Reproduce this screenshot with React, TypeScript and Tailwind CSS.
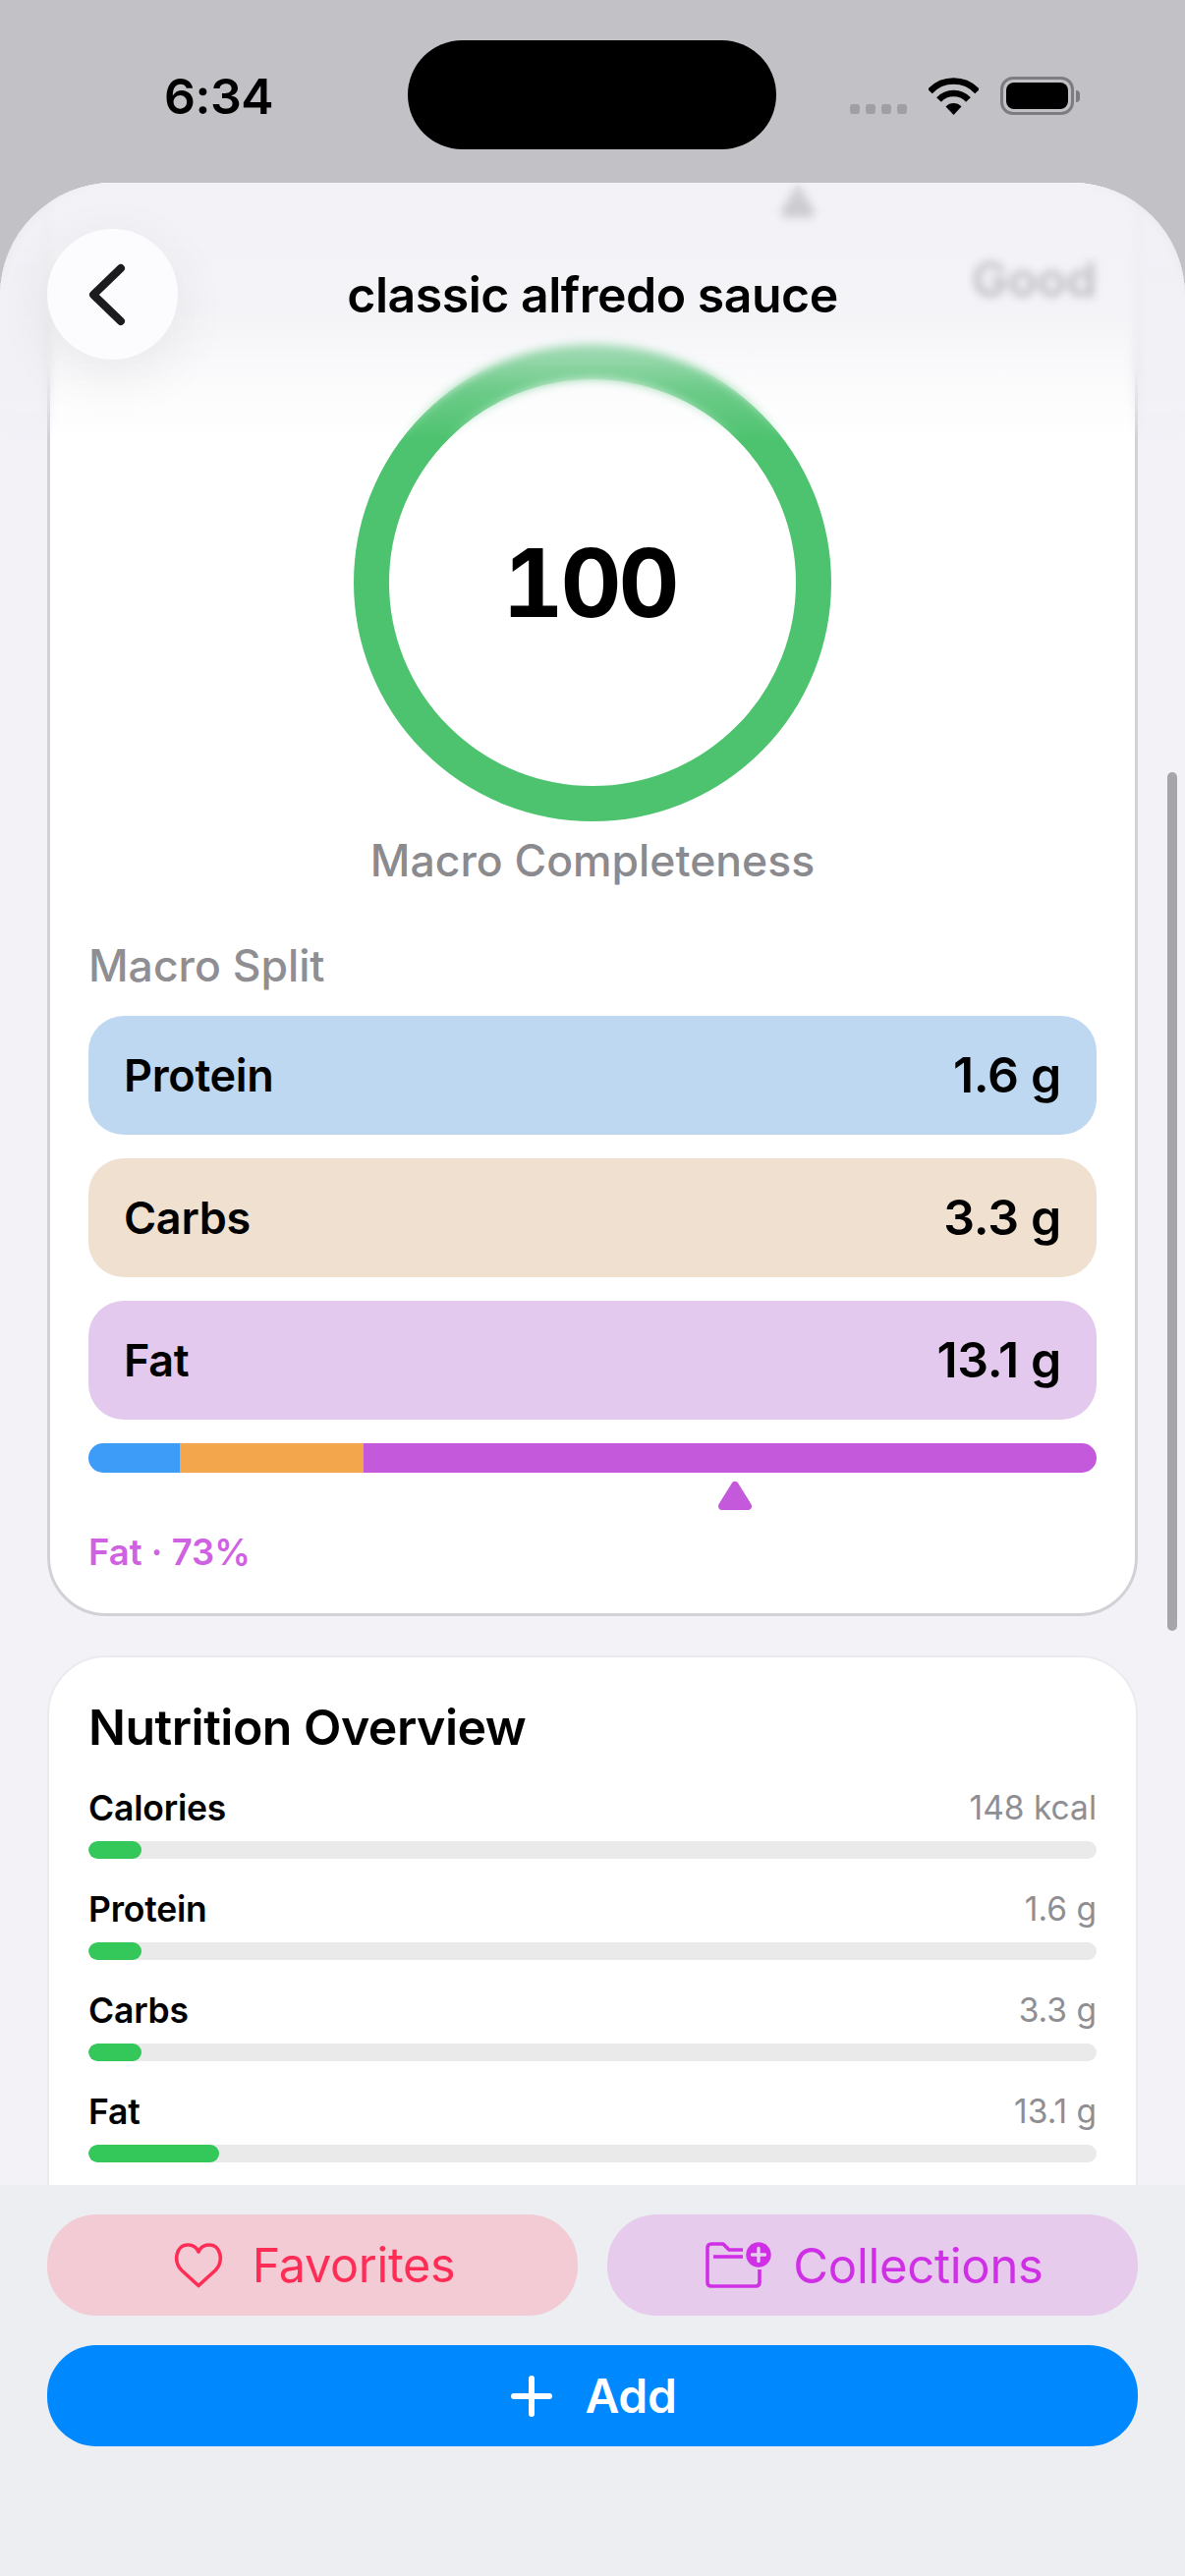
import React from "react";

const font = { fontFamily: "Inter, 'Liberation Sans', sans-serif" };

function Wifi() {
  return (
    <svg width="51" height="38" viewBox="0 0 51 38" fill="none" stroke="black" strokeWidth="6.5">
      <path d="M1.4 14 A33 33 0 0 1 49.6 14" />
      <path d="M10.5 22.5 A20.5 20.5 0 0 1 40.5 22.5" />
      <path d="M25.5 38 L17.5 29.5 A11 11 0 0 1 33.5 29.5 Z" fill="black" stroke="none" />
    </svg>
  );
}

function Battery() {
  return (
    <div className="flex items-center gap-[2px]">
      <div className="flex h-[39px] w-[75px] items-center justify-center rounded-[13px] border-[3px] border-[#7d7d80]">
        <div className="h-[27px] w-[63px] rounded-[8px] bg-black" />
      </div>
      <div className="h-[12px] w-[4px] rounded-r-[4px] bg-[#7d7d80]" />
    </div>
  );
}

function Triangle({ color, w, h }: { color: string; w: number; h: number }) {
  return (
    <svg width={w} height={h} viewBox="0 0 34 31" preserveAspectRatio="none" className="block">
      <path d="M17 5 L30 26 H4 Z" fill={color} stroke={color} strokeWidth="8" strokeLinejoin="round" />
    </svg>
  );
}

function MacroRow({ label, value, bg }: { label: string; value: string; bg: string }) {
  return (
    <div className={`flex h-[121px] items-center justify-between rounded-[36px] px-[36px] ${bg}`}>
      <span className="text-[45px] font-semibold tracking-[-0.3px] text-black">{label}</span>
      <span className="text-[50px] font-semibold tracking-[-0.3px] text-black">{value}</span>
    </div>
  );
}

function NutritionRow({ label, value, fill }: { label: string; value: string; fill: string }) {
  return (
    <div className="pb-[29px]">
      <div className="mb-[12px] flex h-[44px] items-center justify-between">
        <span className="mt-[2px] text-[35.5px] font-semibold tracking-[-0.2px] text-black">{label}</span>
        <span className="text-[33.5px] text-[#8e8e93]">{value}</span>
      </div>
      <div className="h-[18px] overflow-hidden rounded-full bg-[#eaeaea]">
        <div className={`h-full rounded-full bg-[#34c759] ${fill}`} />
      </div>
    </div>
  );
}

export default function App() {
  return (
    <div className="relative flex h-[2622px] w-[1206px] flex-col overflow-hidden bg-[#c2c1c6]" style={font}>
      {/* status bar */}
      <div className="relative flex h-[186px] shrink-0 items-start">
        <div className="mt-[68px] ml-[167px] w-[248px] text-[50px] leading-[60px] font-semibold tracking-[-0.5px] text-black">6:34</div>
        <div className="mt-[41px] h-[111px] w-[375px] rounded-full bg-black" />
        <div className="mt-[78px] ml-[75px] flex items-end">
          <div className="mb-[1px] flex gap-[6px]">
            <div className="h-[10px] w-[10px] rounded-[3px] bg-[#a0a0a3]" />
            <div className="h-[10px] w-[10px] rounded-[3px] bg-[#a0a0a3]" />
            <div className="h-[10px] w-[10px] rounded-[3px] bg-[#a0a0a3]" />
            <div className="h-[10px] w-[10px] rounded-[3px] bg-[#a0a0a3]" />
          </div>
          <div className="ml-[22px]"><Wifi /></div>
          <div className="ml-[22px]"><Battery /></div>
        </div>
      </div>

      {/* sheet */}
      <div className="relative flex-1 overflow-hidden rounded-t-[115px] bg-[#f2f2f7]">
        <div className="-mt-[60px] flex flex-col gap-[40px] px-[48px]">
          {/* score card */}
          <div className="rounded-[60px] border-[3px] border-[#d1d1d6] bg-white px-[39px] pb-[40px]">
            <div className="pt-[59px]">
              <div className="ml-[705px] w-[34px]"><Triangle color="#000" w={34} h={34} /></div>
              <div className="mt-[33px] text-right text-[49px] leading-[60px] font-semibold text-[#111]">Good</div>
            </div>
            <div className="mt-[35px] flex h-[486px] w-[486px] mx-auto items-center justify-center rounded-full border-[36px] border-[#4dc36f]">
              <span className="mr-[6px] text-[96px] font-bold tracking-[-3px] text-black tabular-nums">100</span>
            </div>
            <div className="mt-[13px] text-center text-[44.5px] leading-[54px] font-medium text-[#8a8a8f]">Macro Completeness</div>
            <div className="mt-[53px] text-[44.5px] leading-[54px] font-medium text-[#8e8e93]">Macro Split</div>
            <div className="mt-[24px] flex flex-col gap-[24px]">
              <MacroRow label="Protein" value="1.6 g" bg="bg-[#bfd8f2]" />
              <MacroRow label="Carbs" value="3.3 g" bg="bg-[#f0e0d0]" />
              <MacroRow label="Fat" value="13.1 g" bg="bg-[#e3c9ee]" />
            </div>
            <div className="mt-[24px] flex h-[30px] overflow-hidden rounded-full">
              <div className="w-[93px] bg-[#3d9cf8]" />
              <div className="w-[187px] bg-[#f3a64b]" />
              <div className="flex-1 bg-[#c459dc]" />
            </div>
            <div className="mt-[8px] ml-[641px] w-[34px]"><Triangle color="#c459dc" w={34} h={31} /></div>
            <div className="mt-[20px] text-[36.5px] leading-[44px] font-semibold text-[#cf62e2]">Fat · 73%</div>
          </div>

          {/* nutrition card */}
          <div className="rounded-[60px] border-[2px] border-[#ebebef] bg-white px-[40px] pt-[41px] pb-[80px]">
            <div className="mb-[30px] text-[50px] leading-[60px] font-semibold tracking-[-0.5px] text-black">Nutrition Overview</div>
            <NutritionRow label="Calories" value="148 kcal" fill="w-[54px]" />
            <NutritionRow label="Protein" value="1.6 g" fill="w-[54px]" />
            <NutritionRow label="Carbs" value="3.3 g" fill="w-[54px]" />
            <NutritionRow label="Fat" value="13.1 g" fill="w-[133px]" />
          </div>
        </div>

        {/* top fade */}
        <div className="pointer-events-none absolute inset-x-0 top-0 h-[264px] backdrop-blur-[5px] [mask-image:linear-gradient(to_bottom,black_70%,transparent)]" />
        <div className="pointer-events-none absolute inset-x-0 top-0 h-[264px] bg-[linear-gradient(to_bottom,#f0f0f5e0_0%,#f0f0f5bb_50%,#f0f0f58c_62%,#f0f0f533_80%,#f0f0f500_100%)]" />

        {/* header */}
        <div className="absolute top-[47px] left-[48px] flex h-[133px] w-[133px] items-center justify-center rounded-full bg-[#fcfcfe] shadow-[0_16px_60px_rgba(0,0,0,0.07)]">
          <svg width="44" height="68" viewBox="0 0 44 68" fill="none" stroke="#1c1c1e" strokeWidth="8" strokeLinecap="round" strokeLinejoin="round" className="-ml-[8px]">
            <path d="M34 7 L6 34 L34 61" />
          </svg>
        </div>
        <div className="absolute inset-x-0 top-[84px] text-center text-[50px] leading-[60px] font-semibold tracking-[-0.5px] text-black">classic alfredo sauce</div>

        {/* scroll indicator */}
        <div className="absolute top-[600px] left-[1188px] h-[874px] w-[10px] rounded-full bg-[#a6a6aa]" />

        {/* bottom bar */}
        <div className="absolute inset-x-0 bottom-0 flex h-[398px] flex-col gap-[30px] bg-[#edeef1] px-[48px] pt-[30px]">
          <div className="flex gap-[30px]">
            <div className="flex h-[103px] flex-1 items-center justify-center gap-[30px] rounded-[50px] bg-[#f2cbd5] pl-[4px] text-[#ff2d55]">
              <svg width="50" height="47" viewBox="0 0 50 47" fill="none" stroke="#ff2d55" strokeWidth="3.6" strokeLinejoin="round">
                <path d="M25 44.5 L8 29 C-1 20 2 3 14 3 C20 3 23.5 6.5 25 10 C26.5 6.5 30 3 36 3 C48 3 51 20 42 29 Z" />
              </svg>
              <span className="mt-[2px] text-[48.5px] tracking-[-0.3px]">Favorites</span>
            </div>
            <div className="flex h-[103px] flex-1 items-center justify-center gap-[22px] rounded-[50px] bg-[#e7cbec] pl-[4px] text-[#cf30e5]">
              <svg width="67" height="47" viewBox="0 0 67 47" fill="none" stroke="#cf30e5" strokeWidth="3.6">
                <path d="M38 8 H24 L18 2 H6 Q2 2 2 6 V41 Q2 45 6 45 H51 Q55 45 55 41 V28" strokeLinejoin="round" />
                <path d="M8 15 H38" />
                <circle cx="54" cy="13" r="12.7" fill="#cf30e5" stroke="none" />
                <path d="M54 6.5 V19.5 M47.5 13 H60.5" stroke="#e7cbec" strokeWidth="3.4" strokeLinecap="round" />
              </svg>
              <span className="mt-[2px] text-[49px] tracking-[-0.3px]">Collections</span>
            </div>
          </div>
          <div className="flex h-[103px] items-center justify-center gap-[33px] rounded-[50px] bg-[#0088ff] pl-[3px] text-white">
            <svg width="42" height="42" viewBox="0 0 42 42" fill="none" stroke="white" strokeWidth="6" strokeLinecap="round">
              <path d="M21 3 V39 M3 21 H39" />
            </svg>
            <span className="mt-[1px] text-[48px] font-semibold tracking-[-0.3px]">Add</span>
          </div>
        </div>
      </div>
    </div>
  );
}
